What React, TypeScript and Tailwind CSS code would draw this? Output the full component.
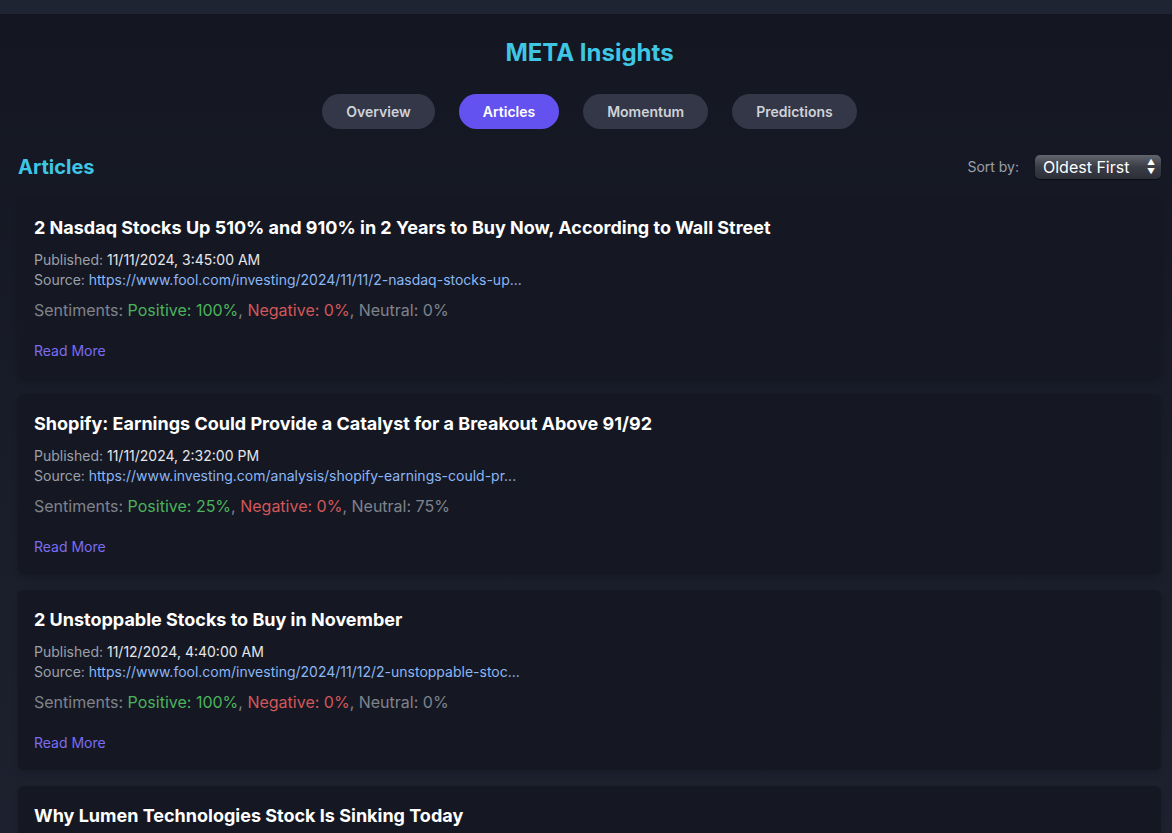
import { useState } from "react";

const articles = [
  {
    title: "2 Nasdaq Stocks Up 510% and 910% in 2 Years to Buy Now, According to Wall Street",
    published: "11/11/2024, 3:45:00 AM",
    source: "https://www.fool.com/investing/2024/11/11/2-nasdaq-stocks-up...",
    positive: 100,
    negative: 0,
    neutral: 0,
  },
  {
    title: "Shopify: Earnings Could Provide a Catalyst for a Breakout Above 91/92",
    published: "11/11/2024, 2:32:00 PM",
    source: "https://www.investing.com/analysis/shopify-earnings-could-pr...",
    positive: 25,
    negative: 0,
    neutral: 75,
  },
  {
    title: "2 Unstoppable Stocks to Buy in November",
    published: "11/12/2024, 4:40:00 AM",
    source: "https://www.fool.com/investing/2024/11/12/2-unstoppable-stoc...",
    positive: 100,
    negative: 0,
    neutral: 0,
  },
  {
    title: "Why Lumen Technologies Stock Is Sinking Today",
    published: "11/12/2024, 11:18:00 AM",
    source: "https://www.fool.com/investing/2024/11/12/why-lumen-technolo...",
    positive: 0,
    negative: 50,
    neutral: 50,
  },
];

const tabs = ["Overview", "Articles", "Momentum", "Predictions"];

const ArticleCard = ({ article }: { article: (typeof articles)[number] }) => {
  return (
    <div className="bg-[#151823] rounded-md px-4 pt-4 pb-[17px] shadow-md">
      <h3 className="text-lg leading-7 font-bold text-white">{article.title}</h3>
      <p className="mt-2 text-sm leading-5 text-[#9ca0aa]">
        Published: <span className="text-[#e4e6ea]">{article.published}</span>
      </p>
      <p className="text-sm leading-5 text-[#9ca0aa]">
        Source: <a className="text-[#8cb6f4]">{article.source}</a>
      </p>
      <p className="mt-2 text-base leading-6 text-[#7f838d]">
        Sentiments: <span className="text-[#4bb35c]">Positive: {article.positive}%</span>,{" "}
        <span className="text-[#d2575a]">Negative: {article.negative}%</span>, Neutral:{" "}
        {article.neutral}%
      </p>
      <a className="block mt-[19px] text-sm leading-5 text-[#7b6cf2]">Read More</a>
    </div>
  );
};

const App = () => {
  const [active, setActive] = useState("Articles");

  return (
    <div className="min-h-screen bg-[#1f2331] font-['Inter','Liberation_Sans',sans-serif]">
      <div className="h-[14px] bg-[#1f2432]" />
      <div className="bg-gradient-to-b from-[#141722] to-[#1f2331] pl-[18px] pr-[11px] pb-8">
        <h1 className="pt-[23px] text-center text-2xl leading-8 font-bold text-[#3fc6e4]">
          META Insights
        </h1>
        <div className="mt-[25px] flex justify-center gap-6">
          {tabs.map((tab) => (
            <button
              key={tab}
              onClick={() => setActive(tab)}
              className={`h-[35px] px-6 rounded-full text-sm font-semibold ${
                active === tab ? "bg-[#6352ef] text-white" : "bg-[#343747] text-[#cfd2d8]"
              }`}
            >
              {tab}
            </button>
          ))}
        </div>
        <div className="mt-[24px] flex items-center justify-between">
          <h2 className="text-xl leading-7 font-bold text-[#3fc6e4]">Articles</h2>
          <div className="flex items-center gap-4">
            <span className="text-sm text-[#9ca0aa]">Sort by:</span>
            <div className="relative">
              <select
                defaultValue="oldest"
                className="appearance-none w-[126px] h-[24px] pl-2 pr-6 rounded-[5px] bg-gradient-to-b from-[#62656d] via-[#3a3d46] to-[#2c2f38] text-white text-base leading-5 font-['Inter','Liberation_Sans',sans-serif] shadow-[0_1px_1px_rgba(0,0,0,0.5)] outline-none"
              >
                <option value="oldest">Oldest First</option>
                <option value="newest">Newest First</option>
              </select>
              <span className="pointer-events-none absolute right-[6px] top-[3px] flex flex-col items-center text-white text-[8px] leading-[9px]">
                <span>▲</span>
                <span>▼</span>
              </span>
            </div>
          </div>
        </div>
        <div className="mt-[17px] flex flex-col gap-4">
          {articles.map((a, i) => (
            <ArticleCard key={i} article={a} />
          ))}
        </div>
      </div>
    </div>
  );
};

export default App;
